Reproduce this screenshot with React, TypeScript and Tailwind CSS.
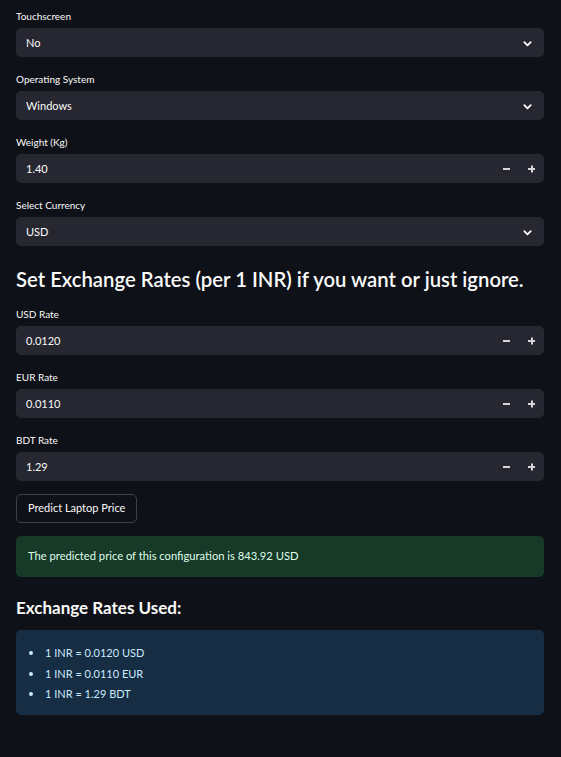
import type { ReactNode } from 'react'

const font = { fontFamily: '"Source Sans Pro", Lato, "Liberation Sans", sans-serif' }

function Chevron() {
  return (
    <svg className="w-[11px] h-[11px] text-[#fafafa]" viewBox="0 0 24 24" fill="none" stroke="currentColor" strokeWidth="4" strokeLinecap="round" strokeLinejoin="round">
      <path d="M5 9l7 7 7-7" />
    </svg>
  )
}

function Field({ label, children }: { label: string; children: ReactNode }) {
  return (
    <div className="flex flex-col">
      <div className="h-[19px] text-[10px] leading-[14px] text-[#fafafa]">{label}</div>
      {children}
    </div>
  )
}

function SelectBox({ label, value }: { label: string; value: string }) {
  return (
    <Field label={label}>
      <div className="h-[29px] rounded-[5px] bg-[#262730] flex items-center justify-between pl-[10px] pr-[11px] pt-[1px] text-[11px] text-[#fafafa]">
        <span>{value}</span>
        <Chevron />
      </div>
    </Field>
  )
}

function NumberBox({ label, value }: { label: string; value: string }) {
  return (
    <Field label={label}>
      <div className="h-[29px] rounded-[5px] bg-[#262730] flex items-center justify-between pl-[10px] text-[11px] text-[#fafafa]">
        <span className="pt-[1px]">{value}</span>
        <div className="flex items-center h-full">
          <span className="w-[25px] flex justify-center">
            <span className="block w-[7px] h-[2px] bg-[#d6d6d9]" />
          </span>
          <span className="w-[25px] flex justify-center relative">
            <span className="block w-[7px] h-[2px] bg-[#d6d6d9]" />
            <span className="absolute top-1/2 left-1/2 -translate-x-1/2 -translate-y-1/2 block w-[2px] h-[7px] bg-[#d6d6d9]" />
          </span>
        </div>
      </div>
    </Field>
  )
}

export default function App() {
  const rates = ['1 INR = 0.0120 USD', '1 INR = 0.0110 EUR', '1 INR = 1.29 BDT']

  return (
    <div className="min-h-[757px] w-full bg-[#0e1117] text-[#fafafa]" style={font}>
      <div className="flex flex-col gap-[15px] pt-[9px] pl-[16px] pr-[17px] pb-[42px]">
        <SelectBox label="Touchscreen" value="No" />
        <SelectBox label="Operating System" value="Windows" />
        <NumberBox label="Weight (Kg)" value="1.40" />
        <SelectBox label="Select Currency" value="USD" />

        <h3 className="h-[31px] pt-[4px] text-[20.3px] leading-[28px] font-semibold whitespace-nowrap">
          Set Exchange Rates (per 1 INR) if you want or just ignore.
        </h3>

        <NumberBox label="USD Rate" value="0.0120" />
        <NumberBox label="EUR Rate" value="0.0110" />
        <NumberBox label="BDT Rate" value="1.29" />

        <div className="-mt-[2px]">
          <button className="h-[29px] px-[11px] rounded-[5px] border border-[#3d4047] bg-[#0e1117] text-[11px] text-[#fafafa]" style={font}>
            Predict Laptop Price
          </button>
        </div>

        <div className="-mt-[2px] h-[41px] rounded-[5px] bg-[#173928] text-[#dffde9] text-[11.2px] flex items-center px-[12px]">
          The predicted price of this configuration is 843.92 USD
        </div>

        <h4 className="-mt-[2px] h-[28px] pt-[6px] text-[17px] leading-[24px] font-bold">Exchange Rates Used:</h4>

        <div className="-mt-[3px] h-[85px] rounded-[5px] bg-[#172d43] text-[#c7ebff] text-[11px] pt-[13px] pl-[13px]">
          <ul className="flex flex-col">
            {rates.map((r) => (
              <li key={r} className="flex items-center h-[20.5px]">
                <span className="w-[4px] h-[4px] rounded-full bg-[#c7ebff] mr-[12px]" />
                {r}
              </li>
            ))}
          </ul>
        </div>
      </div>
    </div>
  )
}
